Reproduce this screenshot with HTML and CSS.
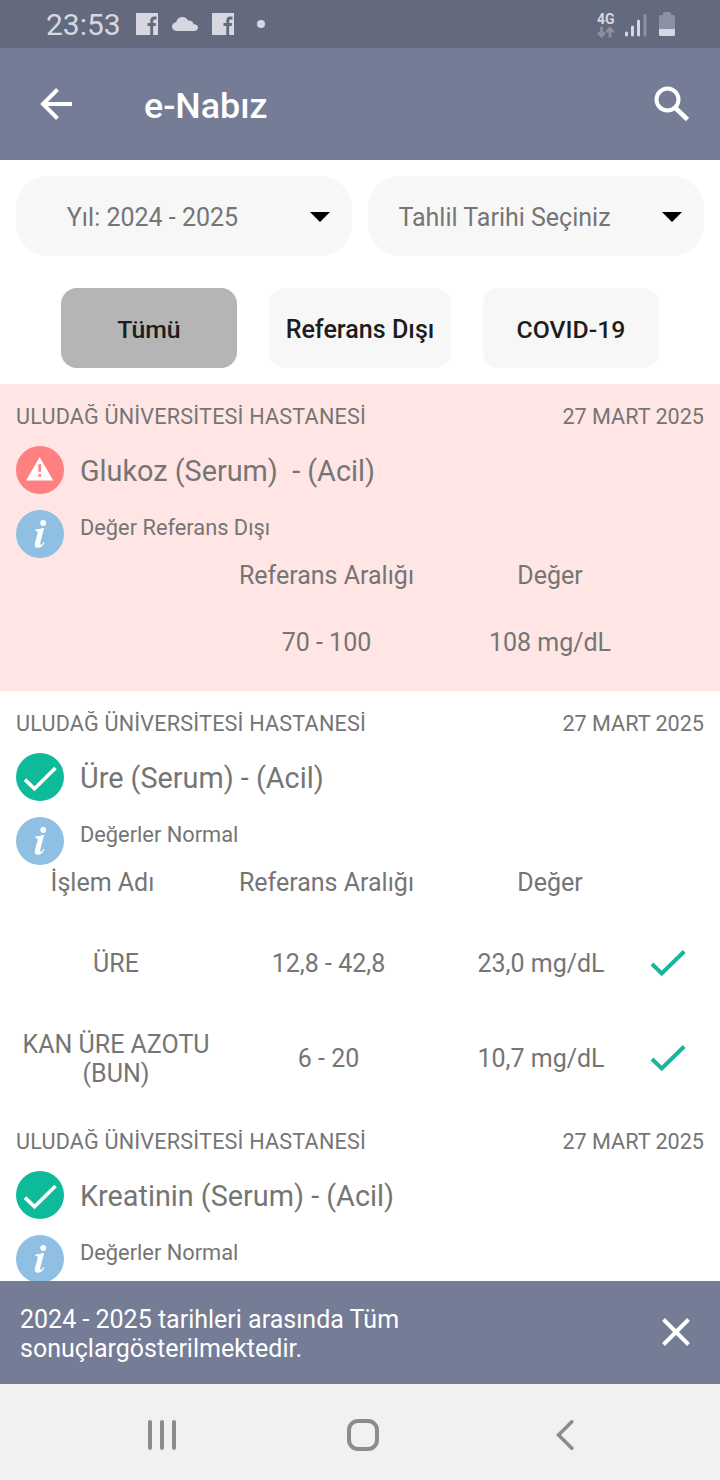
FILE: index.html
```html
<!DOCTYPE html>
<html lang="tr">
<head>
<meta charset="utf-8">
<title>e-Nabız</title>
<link rel="stylesheet" href="styles.css">
</head>
<body>
<svg class="defs" aria-hidden="true">
  <symbol id="facebook" viewBox="0 0 22 22"><rect width="22" height="22" fill="#d7d8df"/><path d="M15.700 22V8q0-3 3-3H20.500M11.500 11.500H19.800" fill="none" stroke="#636a7e" stroke-width="2.900"/></symbol>
  <symbol id="info" viewBox="0 0 48 48"><circle cx="24" cy="24" r="24" class="info-disc"/><circle cx="27.200" cy="13" r="2.900" class="info-mark"/><path class="info-mark" d="M19.400 19.600q4-.2 7.300-1.600h1.400L24.400 32.300q-.6 2.700.5 2.700 1.200 0 2.600-2.900l.9.400q-2.400 5.300-6.400 5.300-4.200 0-3.100-4.600l2.700-9.700q.5-2-.7-2.200l-1.700-.2z"/></symbol>
  <symbol id="done" viewBox="0 0 48 48"><circle cx="24" cy="24" r="24" fill="#0dbb9b"/><path d="M9 26.600 18.500 35.800 39.500 15" fill="none" stroke="#fff" stroke-width="3.600"/></symbol>
  <symbol id="check" viewBox="0 0 36 28"><path d="M2 14 11.700 23.400 34.200 1.500" fill="none" stroke="#18b69b" stroke-width="4"/></symbol>
</svg>
<div class="screen">
  <header class="status">
    <span class="clock">23:53</span>
    <svg width="22" height="22"><use href="#facebook"/></svg>
    <svg class="cloud" width="26" height="14" viewBox="0 0 26 14"><path d="M4.500 14Q0 13.500 0 9.600 0 6 4.300 5 5.500 0 10.700 0 14.300 0 16 3.600 20.500 3 21.600 7.200 26 7.500 26 10.800 25.500 14 21.500 14Z"/></svg>
    <svg width="22" height="22"><use href="#facebook"/></svg>
    <span class="dot"></span>
    <div class="network"><span class="gen">4G</span>
      <svg width="18" height="11" viewBox="0 0 18 11"><path d="M4.500 0v9M1 5.500l3.500 3.700L8 5.500M13 10.500v-9M9.500 5 13 1.300 16.500 5" fill="none" stroke="#8d91a1" stroke-width="2.600"/></svg>
    </div>
    <svg class="signal" width="22" height="23" viewBox="0 0 22 23"><path d="M1.500 19v2M7.500 13v8M13.500 7v14" stroke="#d7d8df" stroke-width="3" stroke-linecap="round"/><path d="M20 1.500V21" stroke="#8d91a1" stroke-width="3" stroke-linecap="round"/></svg>
    <svg class="battery" width="16" height="24" viewBox="0 0 16 24"><path d="M4 3V1.500Q4 0 5.500 0h5Q12 0 12 1.500V3h2.500Q16 3 16 4.500V17H0V4.500Q0 3 1.500 3Z" fill="#8d91a3"/><path d="M0 17h16v5.500q0 1.500-1.500 1.500h-13Q0 24 0 22.500Z" fill="#d7d8df"/></svg>
  </header>
  <nav class="appbar">
    <svg width="32" height="32" viewBox="0 0 32 32"><path d="M32 16H3M17.500 1.500 3 16 17.500 30.500" fill="none" stroke="#fff" stroke-width="4"/></svg>
    <h1>e-Nabız</h1>
    <svg class="search" width="36" height="36" viewBox="0 0 36 36"><circle cx="13.500" cy="13.500" r="11" fill="none" stroke="#fff" stroke-width="4"/><path d="M22 22.500 33.500 33.500" stroke="#fff" stroke-width="4.600"/></svg>
  </nav>
  <section class="filters">
    <div class="select"><span>Yıl: 2024 - 2025</span><i class="caret"></i></div>
    <div class="select"><span>Tahlil Tarihi Seçiniz</span><i class="caret"></i></div>
  </section>
  <section class="tabs">
    <button class="tab active">Tümü</button>
    <button class="tab wide">Referans Dışı</button>
    <button class="tab">COVID-19</button>
  </section>
  <main class="results">
    <article class="card alert">
      <div class="meta"><span class="place">ULUDAĞ ÜNİVERSİTESİ HASTANESİ</span><span>27 MART 2025</span></div>
      <div class="name"><svg width="48" height="48" viewBox="0 0 48 48"><circle cx="24" cy="24" r="24" fill="#ff8080"/><path fill="#fff" fill-rule="evenodd" d="M23.700 11 37.200 34.500H10ZM22.300 18.300v7.500h2.800v-7.500ZM22.300 28v2.800h2.800V28Z"/></svg><h2>Glukoz (Serum)&nbsp; - (Acil)</h2></div>
      <div class="state"><svg width="48" height="48"><use href="#info"/></svg><span>Değer Referans Dışı</span></div>
      <div class="grid"><span></span><span>Referans Aralığı</span><span>Değer</span></div>
      <div class="grid single"><span></span><span>70 - 100</span><span>108 mg/dL</span></div>
    </article>
    <article class="card">
      <div class="meta"><span class="place">ULUDAĞ ÜNİVERSİTESİ HASTANESİ</span><span>27 MART 2025</span></div>
      <div class="name"><svg width="48" height="48"><use href="#done"/></svg><h2>Üre (Serum) - (Acil)</h2></div>
      <div class="state"><svg width="48" height="48"><use href="#info"/></svg><span>Değerler Normal</span></div>
      <div class="grid"><span>İşlem Adı</span><span>Referans Aralığı</span><span>Değer</span></div>
      <div class="rows">
        <div class="row"><span>ÜRE</span><span>12,8 - 42,8</span><span>23,0 mg/dL</span><svg width="36" height="28"><use href="#check"/></svg></div>
        <div class="row"><span>KAN ÜRE AZOTU (BUN)</span><span>6 - 20</span><span>10,7 mg/dL</span><svg width="36" height="28"><use href="#check"/></svg></div>
      </div>
    </article>
    <article class="card">
      <div class="meta"><span class="place">ULUDAĞ ÜNİVERSİTESİ HASTANESİ</span><span>27 MART 2025</span></div>
      <div class="name"><svg width="48" height="48"><use href="#done"/></svg><h2>Kreatinin (Serum) - (Acil)</h2></div>
      <div class="state"><svg width="48" height="48"><use href="#info"/></svg><span>Değerler Normal</span></div>
    </article>
  </main>
  <aside class="snackbar">
    <p>2024 - 2025 tarihleri arasında Tüm sonuçlargösterilmektedir.</p>
    <svg width="28" height="28" viewBox="0 0 28 28"><path d="M1.500 1.500l25 25M26.500 1.500l-25 25" stroke="#fff" stroke-width="4"/></svg>
  </aside>
  <footer class="navbar">
    <svg width="28" height="30" viewBox="0 0 28 30"><path d="M2 2v26M14 2v26M26 2v26" stroke="#8c8c8c" stroke-width="4" stroke-linecap="round"/></svg>
    <svg width="32" height="32" viewBox="0 0 32 32"><rect x="2" y="2" width="28" height="28" rx="9" fill="none" stroke="#8c8c8c" stroke-width="4"/></svg>
    <svg width="18" height="30" viewBox="0 0 18 30"><path d="M15.800 1.700 2.500 15l13.300 13.300" fill="none" stroke="#8c8c8c" stroke-width="3.600" stroke-linecap="round"/></svg>
  </footer>
</div>
</body>
</html>
```
FILE: styles.css
```css
* { box-sizing: border-box; }
body, h1, h2, p { margin: 0; }
body { font-family: Roboto, "Liberation Sans", sans-serif; font-size: 25px; line-height: 29px; color: #757575; background: #fff; }
svg { flex: none; display: block; }
.defs { width: 0; height: 0; position: absolute; }
.screen { width: 720px; height: 1480px; display: flex; flex-direction: column; overflow: hidden; }
.status { height: 48px; flex: none; display: flex; align-items: center; padding: 0 45px 0 46px; background: #636a7e; color: #d7d8df; fill: #d7d8df; }
.clock { font-size: 30px; width: 90px; padding-top: 1px; }
.cloud { margin: 0 14px; }
.dot { width: 8px; height: 8px; border-radius: 50%; background: #d7d8df; margin-left: 23px; }
.network { margin-left: auto; width: 20px; padding-top: 2px; }
.gen { display: block; font-size: 14px; line-height: 15px; font-weight: 700; }
.signal { margin: 2px 12px 0 8px; }
.appbar { height: 112px; flex: none; display: flex; align-items: center; padding: 0 30px 0 40px; background: #747d95; color: #fff; }
h1 { font-size: 35.8px; font-weight: 500; line-height: 42px; margin: 4px 0 0 72px; }
.search { margin-left: auto; }
.filters { display: flex; gap: 16px; padding: 16px; }
.select { flex: 1; height: 80px; border-radius: 32px; background: #f7f7f7; display: flex; align-items: center; padding: 2px 22px 0 20px; }
.select span { flex: 1; text-align: center; padding-right: 41px; }
.caret { width: 20px; height: 10px; background: #000; clip-path: polygon(0 0, 100% 0, 50% 100%); }
.tabs { display: flex; justify-content: center; gap: 32px; padding: 16px 0; }
.tab { width: 176px; height: 80px; border: 0; border-radius: 16px; padding: 3px 0 0; background: #f7f7f7; color: #1d1d1d; font: 500 24.8px Roboto, sans-serif; }
.tab.wide { width: 182px; font-size: 25.1px; }
.tab.active { background: #b5b5b5; }
.results { flex: 1; min-height: 0; overflow: hidden; }
.alert { background: #ffe6e5; }
.meta { height: 62px; display: flex; align-items: center; justify-content: space-between; padding: 3px 16px 0; font-size: 21.6px; }
.place { letter-spacing: .2px; }
.name { height: 48px; display: flex; align-items: center; gap: 16px; padding-left: 16px; }
h2 { font-size: 28.8px; font-weight: 400; padding-top: 3px; }
.state { height: 64px; display: flex; gap: 16px; padding: 16px 0 0 16px; font-size: 21.8px; }
.state span { padding-top: 3px; }
.info-disc { fill: #8fbfe2; }
.info-mark { fill: #fff; }
.alert .info-disc { fill: #8fb7d8; }
.alert .info-mark { fill: #ffe9e8; }
.grid { height: 35px; display: grid; grid-template-columns: 205px 243px 204px; align-items: center; text-align: center; }
.grid.single { height: 98px; }
.rows { padding: 16px 0 3px 10px; }
.row { height: 95px; display: grid; grid-template-columns: 212px 213px 212px 42px; align-items: center; text-align: center; }
.row svg { justify-self: center; }
.snackbar { height: 103px; flex: none; display: flex; align-items: center; justify-content: space-between; padding: 0 30px 0 20px; background: #747d95; color: #fff; }
.snackbar p { width: 420px; padding-top: 2px; }
.snackbar svg { margin-bottom: 2px; }
.navbar { height: 96px; flex: none; display: flex; align-items: center; padding: 6px 0 0 148px; background: #f1f1f1; }
.navbar svg:nth-child(2) { margin: 0 177px 0 171px; }
```
